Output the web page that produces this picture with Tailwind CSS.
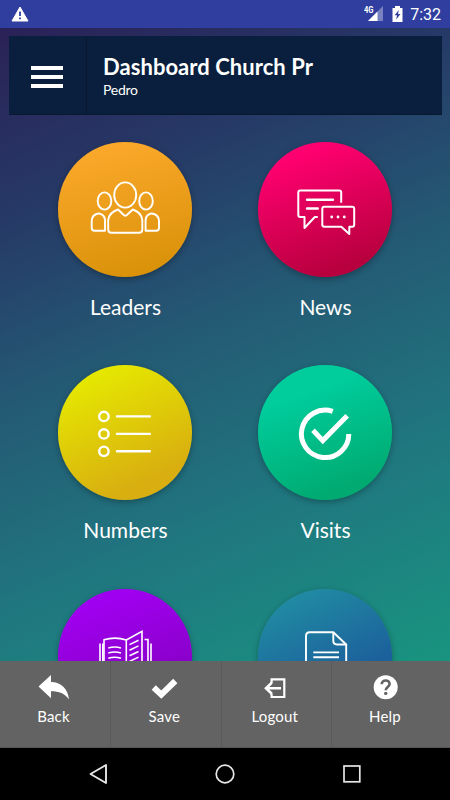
<!DOCTYPE html>
<html lang="en">
  <head>
    <meta charset="UTF-8" />
    <meta name="viewport" content="width=device-width, initial-scale=1.0" />
    <title>Dashboard Church Pr</title>
    <script src="https://cdn.jsdelivr.net/npm/@tailwindcss/browser@4"></script>
  </head>
  <body class="bg-black text-white font-['Lato',sans-serif]">
    <div class="flex flex-col w-[450px] h-[800px] overflow-hidden">
      <!-- status bar -->
      <div class="flex items-center h-7 shrink-0 bg-[#303f9f] pl-[11px] pr-[9px]">
        <svg class="w-[18px] h-4 -mt-px" viewBox="0 0 18 16">
          <path d="M9 1 L17 15 H1 Z" fill="#fff" stroke="#fff" stroke-linejoin="round" />
          <path d="M9 5.5 V10 M9 11.5 V13.3" stroke="#303f9f" stroke-width="1.8" />
        </svg>
        <svg class="w-5 h-4 ml-auto" viewBox="0 0 20 16">
          <path d="M19 0 V15 H4 Z" fill="#fff" fill-opacity="0.35" />
          <path d="M13.5 5.5 V15 H4 Z" fill="#fff" />
          <path d="M0 0 H10 V8 H0 Z" fill="#303f9f" />
          <text x="0" y="7.3" font-family="Roboto" font-weight="700" font-size="8.5" textLength="9.5" lengthAdjust="spacingAndGlyphs" fill="#fff">4G</text>
        </svg>
        <svg class="w-[11px] h-4 ml-2" viewBox="0 0 11 16">
          <path d="M3 0 H8 V2 H10.5 V16 H0.5 V2 H3 Z" fill="#fff" />
          <path d="M6.8 4 L2.6 9.3 H5 L4.2 13.6 L8.5 8 H6 Z" fill="#303f9f" />
        </svg>
        <span class="ml-[7px] pt-0.5 font-['Roboto',sans-serif] text-base leading-7">7:32</span>
      </div>

      <main class="flex-1 min-h-0 overflow-hidden px-[9px] pt-2 bg-[linear-gradient(157deg,#2a2157_0%,#263a67_24%,#245873_45%,#20757f_70%,#199480_100%)]">
        <header class="flex w-[433px] h-[79px] bg-[#091f3d] border-b border-[#07182f]">
          <button class="flex flex-col items-center justify-center gap-[4.5px] w-[78px] pt-1 pr-0.5 border-r border-[#07182f]">
            <span class="w-8 h-[4.5px] bg-white"></span>
            <span class="w-8 h-[4.5px] bg-white"></span>
            <span class="w-8 h-[4.5px] bg-white"></span>
          </button>
          <div class="pl-4 pt-[17px] whitespace-nowrap">
            <h1 class="text-[22px] leading-7 font-bold tracking-[0.05px]">Dashboard Church Pr</h1>
            <p class="text-sm leading-5 -mt-px tracking-[-0.25px]">Pedro</p>
          </div>
        </header>

        <div class="grid grid-cols-[200px_200px] justify-center auto-rows-[223.3px] pt-[27px]">
          <div class="flex flex-col items-center">
            <div class="w-[134.5px] h-[134.5px] rounded-full bg-[linear-gradient(165deg,#ffab2e,#d68f06)] shadow-[0_2px_6px_rgba(0,0,0,0.3)]">
              <svg class="w-[134px] h-[134px]" viewBox="0 0 134 134" fill="none" stroke="#fff" stroke-width="1.9" stroke-linejoin="round">
                <ellipse cx="67.2" cy="53" rx="11" ry="12.6" />
                <ellipse cx="46.5" cy="59" rx="6.8" ry="8.6" />
                <ellipse cx="88" cy="59" rx="6.8" ry="8.6" />
                <path d="M60 67.5 L66 73.2 Q67.3 74.5 68.6 73.2 L74.8 67.5 Q83.5 70.5 84.3 78 V87.5 Q84.3 90.8 81 90.8 H53.5 Q50.2 90.8 50.2 87.5 V78 Q51 70.5 60 67.5 Z" />
                <path d="M38.5 72 Q41 71 43.5 72.3 Q47 74.5 47 78 V88.7 H36.5 Q33.7 88.7 33.7 86 V79 Q33.7 74 38.5 72 Z" />
                <path d="M96 72 Q93.5 71 91 72.3 Q87.6 74.5 87.6 78 V88.7 H98.2 Q101 88.7 101 86 V79 Q101 74 96 72 Z" />
              </svg>
            </div>
            <span class="mt-4 text-[21px] leading-7 pl-px">Leaders</span>
          </div>

          <div class="flex flex-col items-center">
            <div class="w-[134.5px] h-[134.5px] rounded-full bg-[linear-gradient(160deg,#ff0070_15%,#b8003e_85%)] shadow-[0_2px_6px_rgba(0,0,0,0.3)]">
              <svg class="w-[134px] h-[134px]" viewBox="0 0 134 134" fill="none" stroke="#fff" stroke-width="2" stroke-linejoin="round">
                <path d="M83.2 60.8 V50.3 Q83.2 48.4 81.2 48.4 H42.3 Q40.3 48.4 40.3 50.3 V73 Q40.3 75 42.3 75 H46.5 V86 L56.8 75 H59.8" />
                <path d="M49 57.8 H75 M49 66.5 H59.8" stroke-width="2.4" stroke-linecap="round" />
                <path d="M66.3 64.8 H94.2 Q96.2 64.8 96.2 66.8 V82.7 Q96.2 84.7 94.2 84.7 H91.3 V92 L83.3 84.7 H66.3 Q64.3 84.7 64.3 82.7 V66.8 Q64.3 64.8 66.3 64.8 Z" />
                <path d="M73.7 75 h0.01 M80 75 h0.01 M86.3 75 h0.01" stroke-width="2.8" stroke-linecap="round" />
              </svg>
            </div>
            <span class="mt-4 text-[21px] leading-7 pl-px">News</span>
          </div>

          <div class="flex flex-col items-center">
            <div class="w-[134.5px] h-[134.5px] rounded-full bg-[linear-gradient(155deg,#e6ea00_10%,#d8ae10_80%)] shadow-[0_2px_6px_rgba(0,0,0,0.3)]">
              <svg class="w-[134px] h-[134px]" viewBox="0 0 134 134" fill="none" stroke="#fff" stroke-width="2.4">
                <circle cx="45.9" cy="51.4" r="4.7" />
                <circle cx="45.9" cy="68.9" r="4.7" />
                <circle cx="45.9" cy="86.3" r="4.7" />
                <path d="M59 51.4 H91.8 M59 68.9 H91.8 M59 86.3 H91.8" stroke-linecap="round" />
              </svg>
            </div>
            <span class="mt-4 text-[21px] leading-7 pl-px">Numbers</span>
          </div>

          <div class="flex flex-col items-center">
            <div class="w-[134.5px] h-[134.5px] rounded-full bg-[linear-gradient(160deg,#00cc9c_25%,#00aa70_85%)] shadow-[0_2px_6px_rgba(0,0,0,0.3)]">
              <svg class="w-[134px] h-[134px]" viewBox="0 0 134 134" fill="none" stroke="#fff" stroke-width="5">
                <path d="M74.7 46.4 A23.7 23.7 0 1 0 90.8 68.9" />
                <path d="M55 65.3 L64.8 75.6 L89.2 50.8" />
              </svg>
            </div>
            <span class="mt-4 text-[21px] leading-7 pl-px">Visits</span>
          </div>

          <div class="flex flex-col items-center">
            <div class="w-[134.5px] h-[134.5px] rounded-full bg-[linear-gradient(160deg,#a000f0_15%,#8000b8_90%)] shadow-[0_2px_6px_rgba(0,0,0,0.3)]">
              <svg class="w-[134px] h-[134px]" viewBox="0 0 134 134" fill="none" stroke="#fff" stroke-width="1.6">
                <path d="M42 54.5 V90 M44.8 54.5 V90 M93 54.5 V90 M90 90 V50.5 H86.5" />
                <path d="M46 90 V50.8 Q57 47.3 68.3 51 V90 M68.3 51 L84 42.3 V90" />
                <path d="M50.3 59 Q56.7 57 63 59 M50.3 64 Q56.7 62 63 64 M50.3 69.3 Q56.7 67.3 63 69.3 M50.3 74.6 Q56.7 72.6 63 74.6" />
                <path d="M71.5 55.6 L80.5 51.3 M71.5 61.2 L80.5 56.9 M71.5 66.8 L80.5 62.5 M71.5 72.4 L80.5 68.1" />
              </svg>
            </div>
          </div>

          <div class="flex flex-col items-center">
            <div class="w-[134.5px] h-[134.5px] rounded-full bg-[linear-gradient(155deg,#2088a2_15%,#1c609c_65%)] shadow-[0_2px_6px_rgba(0,0,0,0.3)]">
              <svg class="w-[134px] h-[134px]" viewBox="0 0 134 134" fill="none" stroke="#fff" stroke-width="1.9" stroke-linejoin="round">
                <path d="M48 90 V47 Q48 43.3 51.7 43.3 H75.3 L88.2 55.5 V90" />
                <path d="M75.3 43.3 V51.8 Q75.3 55.5 79 55.5 H88.2" />
                <path d="M55.3 63.4 H81 M55.3 68.3 H81" />
                <path d="M55.3 73.2 H81" />
              </svg>
            </div>
          </div>
        </div>
      </main>

      <!-- action bar -->
      <footer class="grid grid-cols-[111px_110.5px_110.5px_1fr] h-[87px] shrink-0 bg-[#636363] border-b border-[#555]">
        <button class="flex flex-col items-center pt-[13px] pr-[3px] border-r border-[#5a5a5a]">
          <svg class="w-8 h-[26px]" viewBox="0 0 32 26">
            <path d="M0.5 12.5 L13 1 V8 C23 8 30 15 31 25.5 C27 19.5 21 17.3 13 17.3 V24.3 Z" fill="#fff" />
          </svg>
          <span class="mt-1.5 text-[15px] leading-5 tracking-[0.2px]">Back</span>
        </button>
        <button class="flex flex-col items-center pt-[13px] pr-[3px] border-r border-[#5a5a5a]">
          <svg class="w-8 h-[26px]" viewBox="0 0 32 26">
            <path d="M5.7 13.5 L13.3 20.7 L27.3 7" fill="none" stroke="#fff" stroke-width="6" />
          </svg>
          <span class="mt-1.5 text-[15px] leading-5 tracking-[0.2px]">Save</span>
        </button>
        <button class="flex flex-col items-center pt-[13px] pr-[3px] border-r border-[#5a5a5a]">
          <svg class="w-8 h-[26px]" viewBox="0 0 32 26" fill="none" stroke="#fff">
            <path d="M12.6 9 V5.3 H25.3 V23 H12.6 V19.5" stroke-width="2.2" />
            <path d="M22 14.2 H7 M12.8 8.7 L7 14.2 L12.8 19.7" stroke-width="2.6" />
          </svg>
          <span class="mt-1.5 text-[15px] leading-5 tracking-[0.2px]">Logout</span>
        </button>
        <button class="flex flex-col items-center pt-[13px] pr-3">
          <svg class="w-8 h-[26px]" viewBox="0 0 32 26">
            <circle cx="16.7" cy="13.2" r="12" fill="#fff" />
            <path d="M12.7 10.3 C12.7 5.2 20.6 5.2 20.6 10.1 C20.6 13 16.7 13 16.7 16.2" fill="none" stroke="#636363" stroke-width="2.6" />
            <circle cx="16.7" cy="19.4" r="1.7" fill="#636363" />
          </svg>
          <span class="mt-1.5 text-[15px] leading-5 tracking-[0.2px]">Help</span>
        </button>
      </footer>

      <!-- system navigation -->
      <nav class="flex items-center justify-between h-[52px] shrink-0 bg-black pl-[88px] pr-[88px]">
        <svg class="w-5 h-[22px]" viewBox="0 0 20 22">
          <path d="M18 2 V20 L2.5 11 Z" fill="none" stroke="#e6e6e6" stroke-width="1.9" stroke-linejoin="round" />
        </svg>
        <svg class="w-5 h-5" viewBox="0 0 20 20">
          <circle cx="10" cy="10" r="8.8" fill="none" stroke="#e6e6e6" stroke-width="1.7" />
        </svg>
        <svg class="w-5 h-5" viewBox="0 0 20 20">
          <rect x="2" y="2" width="15.8" height="15.8" fill="none" stroke="#e6e6e6" stroke-width="1.7" />
        </svg>
      </nav>
    </div>
  </body>
</html>
